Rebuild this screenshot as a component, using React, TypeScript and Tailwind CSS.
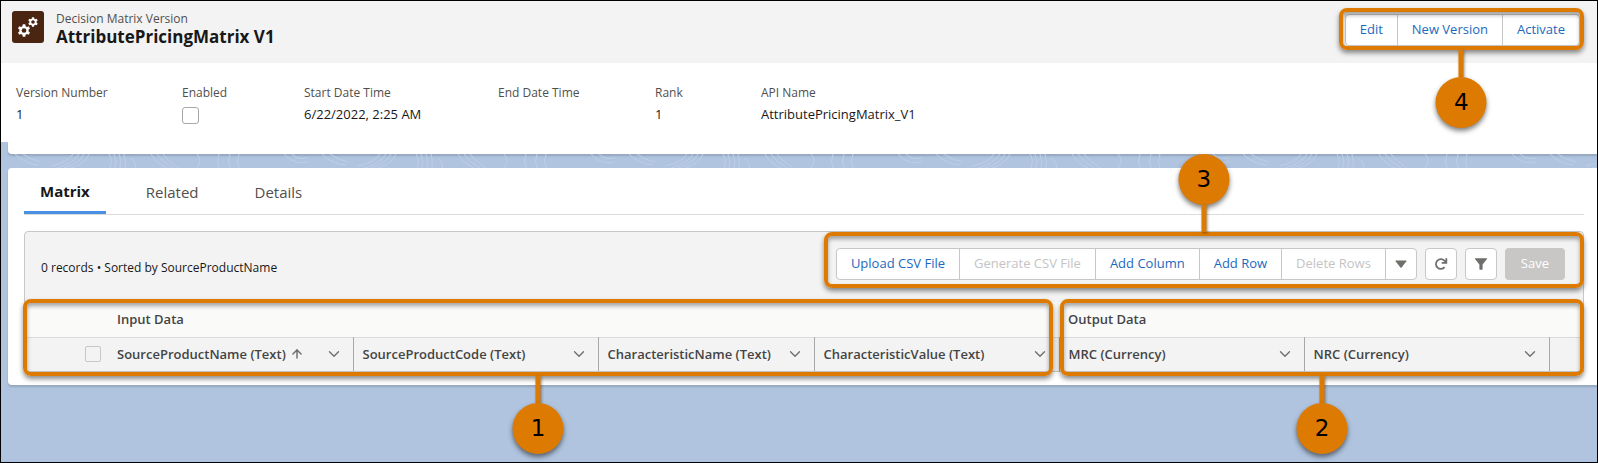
import React from "react";
import { ArrowUp, ChevronDown } from "lucide-react";

function Gear({ cx, cy, r }: { cx: number; cy: number; r: number }) {
  return (
    <g transform={`translate(${cx} ${cy})`}>
      {[0, 60, 120].map((a) => (
        <rect
          key={a}
          x={-r * 0.24}
          y={-r}
          width={r * 0.48}
          height={r * 2}
          rx={r * 0.12}
          transform={`rotate(${a})`}
          fill="#fff"
        />
      ))}
      <circle r={r * 0.74} fill="#fff" />
      <circle r={r * 0.38} fill="#4a2511" />
    </g>
  );
}

function Callout({ n, place, above = false }: { n: number; place: string; above?: boolean }) {
  return (
    <div className={`pointer-events-none absolute z-10 ${place}`}>
      <div className="absolute inset-0 rounded-lg border-4 border-[#dd7a01] shadow-[0_3px_5px_rgba(0,0,0,0.45),inset_0_3px_4px_rgba(0,0,0,0.35)]" />
      <div
        className={`absolute left-1/2 flex h-[78px] -translate-x-1/2 items-center ${
          above ? "bottom-full flex-col" : "top-full flex-col-reverse"
        }`}
      >
        <span className="flex size-[51px] items-center justify-center rounded-full bg-[#dd7a01] font-['DejaVu_Sans',sans-serif] text-[23px] text-black shadow-[0_3px_5px_rgba(0,0,0,0.5)]">
          {n}
        </span>
        <span className="w-[5px] grow bg-[#dd7a01] shadow-[1px_1px_3px_rgba(0,0,0,0.4)]" />
      </div>
    </div>
  );
}

function Field({ label, width, children }: { label: string; width: string; children?: React.ReactNode }) {
  return (
    <div className={width}>
      <dt className="text-xs leading-5 text-[#514f4d]">{label}</dt>
      <dd className="flex h-6 items-center text-[13px] text-[#181818]">{children}</dd>
    </div>
  );
}

const columns = [
  { name: "SourceProductName (Text)", sorted: true },
  { name: "SourceProductCode (Text)" },
  { name: "CharacteristicName (Text)" },
  { name: "CharacteristicValue (Text)" },
  { name: "MRC (Currency)" },
  { name: "NRC (Currency)" },
];

const segment =
  "h-8 border border-[#c9c7c5] bg-white px-[14px] text-[13px] whitespace-nowrap text-[#1b69bd] disabled:text-[#c4c4c4]";
const square =
  "flex size-8 items-center justify-center rounded border border-[#c9c7c5] bg-white text-[#706e6b]";

export default function App() {
  return (
    <div className="flex min-h-screen flex-col border border-black bg-[#b0c4df] font-['Open_Sans','Noto_Sans',sans-serif] text-[#181818]">
      <header className="flex h-[62px] items-start justify-between bg-[#f3f3f3] pt-[10px] pr-[17px] pl-[11px]">
        <div className="flex gap-3">
          <svg className="size-8" viewBox="0 0 32 32" aria-hidden="true">
            <rect width="32" height="32" rx="3" fill="#4a2511" />
            <Gear cx={12} cy={19.5} r={6.2} />
            <Gear cx={21} cy={11} r={4.8} />
          </svg>
          <div>
            <p className="text-xs leading-4 text-[#514f4d]">Decision Matrix Version</p>
            <h1 className="text-[17px] leading-5 font-bold">AttributePricingMatrix V1</h1>
          </div>
        </div>
        <div className="relative mt-[3px] flex">
          <button className={`${segment} rounded-l`}>Edit</button>
          <button className={`${segment} -ml-px`}>New Version</button>
          <button className={`${segment} -ml-px rounded-r`}>Activate</button>
          <Callout n={4} place="-top-1.5 -right-1 -bottom-1 -left-1.5" />
        </div>
      </header>

      <section className="bg-white pt-5">
        <dl className="flex h-[59px] pl-[15px]">
          <Field label="Version Number" width="w-[166px]">1</Field>
          <Field label="Enabled" width="w-[122px]">
            <input
              type="checkbox"
              aria-label="Enabled"
              className="size-[17px] appearance-none rounded-[3px] border border-[#a9a8a6] bg-white"
            />
          </Field>
          <Field label="Start Date Time" width="w-[194px]">6/22/2022, 2:25 AM</Field>
          <Field label="End Date Time" width="w-[157px]" />
          <Field label="Rank" width="w-[106px]">1</Field>
          <Field label="API Name" width="w-[200px]">AttributePricingMatrix_V1</Field>
        </dl>
      </section>
      <div className="ml-[7px] h-3 rounded-bl bg-white shadow-[0_2px_2px_rgba(0,0,0,0.15)]" />

      <svg className="h-[14px] w-full" aria-hidden="true">
        <defs>
          <pattern id="contours" width="307" height="14" patternUnits="userSpaceOnUse">
            <g fill="none" stroke="#bdcee6" strokeWidth="1">
              <path d="M14 0q10 10 24 11M22 0q8 6 18 8M283 0q12 14 30 6M291 0q8 8 20 2" />
              <path d="M56 14Q72 10 78 0M63 14Q78 10 83 0M70 14Q84 10 88 0M50 12Q66 9 72 0" />
              <path d="M108 0q4 6 1 14M113 0q3 6 1 14M118 0q3 6 1 14M123 0q2 6 1 14M130 4q6 6 4 10" />
              <path d="M150 0q6 10 16 14M156 0q6 9 16 14M162 0q6 8 16 14M196 0q6 6 0 14" />
              <path d="M218 0q-3 7 0 14M229 0q-3 7 0 14M238 0q-3 7 0 14" />
            </g>
          </pattern>
        </defs>
        <rect width="100%" height="14" fill="url(#contours)" />
      </svg>

      <main className="ml-[7px] rounded-l bg-white px-4 pb-[13px] shadow-[0_2px_2px_rgba(0,0,0,0.15)]">
        <nav className="mr-[-3px] flex h-[47px] border-b border-[#dddbda] text-[15px] text-[#514f4d]">
          <a href="#matrix" className="flex h-[46px] items-center border-b-[3px] border-[#4a90e2] px-4 pt-1 font-bold text-[#181818]">
            Matrix
          </a>
          <a href="#related" className="flex items-center pt-0.5 pr-7 pl-10">Related</a>
          <a href="#details" className="flex items-center px-7 pt-0.5">Details</a>
        </nav>

        <div className="mr-[-3px] mt-4 rounded-t border border-[#c9c7c5] bg-[#f3f3f3]">
          <div className="flex h-[70px] items-start justify-between pt-4 pr-[18px] pl-4">
            <p className="pt-1 text-xs leading-8">0 records • Sorted by SourceProductName</p>
            <div className="relative flex gap-2">
              <div className="flex">
                <button className={`${segment} rounded-l`}>Upload CSV File</button>
                <button disabled className={`${segment} -ml-px`}>Generate CSV File</button>
                <button className={`${segment} -ml-px`}>Add Column</button>
                <button className={`${segment} -ml-px`}>Add Row</button>
                <button disabled className={`${segment} -ml-px`}>Delete Rows</button>
                <button aria-label="More actions" className={`${square} -ml-px rounded-l-none`}>
                  <svg className="size-3" viewBox="0 0 12 12" fill="currentColor"><path d="M1 2.5h10q.8 0 .4.7L6.6 9.4q-.6.6-1.2 0L.6 3.2Q.2 2.5 1 2.5z" /></svg>
                </button>
              </div>
              <button aria-label="Refresh" className={square}>
                <svg className="size-[14px]" viewBox="0 0 14 14" fill="none" stroke="currentColor" strokeWidth="1.8">
                  <path d="M10.6 10.2A4.9 4.9 0 1 1 10.4 3.6L12 5" />
                  <path d="M12.3 1.2v4.6H7.7" />
                </svg>
              </button>
              <button aria-label="Filter" className={square}>
                <svg className="size-[14px]" viewBox="0 0 14 14" fill="currentColor"><path d="M1.4 1.2h11.2q.9.1.4.9L8.6 7.4v4.7q0 .7-.6.7H6q-.6 0-.6-.7V7.4L1 2.1q-.5-.8.4-.9z" /></svg>
              </button>
              <button disabled className="h-8 rounded bg-[#c9c7c5] px-4 text-[13px] text-white">Save</button>
              <Callout n={3} above place="-top-4 -right-[19px] -bottom-2 -left-3" />
            </div>
          </div>
          <div className="relative">
            <table className="w-full table-fixed border-collapse text-left text-[13px] text-[#444]">
              <colgroup>
                <col className="w-[83px]" />
                <col className="w-[245px]" />
                <col className="w-[245px]" />
                <col className="w-[216px]" />
                <col className="w-[245px]" />
                <col className="w-[245px]" />
                <col className="w-[245px]" />
                <col />
              </colgroup>
              <thead>
                <tr className="h-[35px] border-b border-[#dddbda] bg-[#fafaf9]">
                  <td />
                  <th colSpan={4} className="pl-[9px] font-semibold">Input Data</th>
                  <th colSpan={3} className="pl-[9px] font-semibold">Output Data</th>
                </tr>
                <tr className="h-[34px]">
                  <td className="pr-[7px]">
                    <input type="checkbox" aria-label="Select all rows" className="ml-auto block size-4 appearance-none rounded-xs border border-[#c9c7c5]" />
                  </td>
                  {columns.map((c) => (
                    <th key={c.name} className="border-r border-[#a9a8a6] pr-[10px] pl-[9px] font-semibold">
                      <span className="flex items-center whitespace-nowrap">
                        {c.name}
                        {c.sorted && <ArrowUp strokeWidth={2.5} className="ml-1 size-[14px] text-[#706e6b]" />}
                        <ChevronDown strokeWidth={1.8} className="ml-auto size-[18px] text-[#706e6b]" />
                      </span>
                    </th>
                  ))}
                  <td />
                </tr>
              </thead>
            </table>
            <Callout n={1} place="-top-[3px] -bottom-[5px] -left-0.5 w-[1030px]" />
            <Callout n={2} place="-top-[3px] -right-px -bottom-[5px] left-[1035px]" />
          </div>
        </div>
      </main>
    </div>
  );
}
